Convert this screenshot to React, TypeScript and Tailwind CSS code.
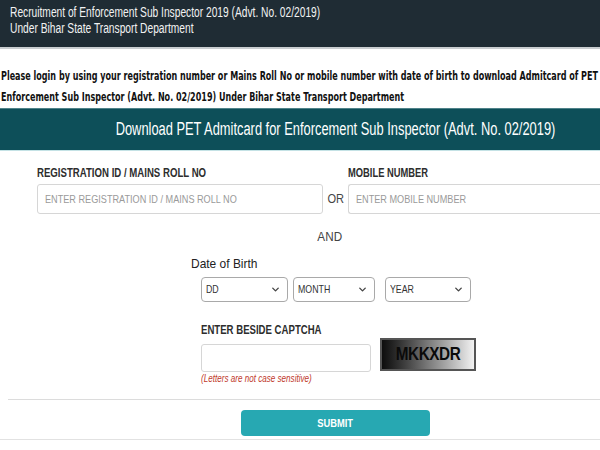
import { ChevronDown } from "lucide-react";

function Sel({ label, w }: { label: string; w: string }) {
  return (
    <div
      className={`${w} h-[25px] border border-[#a9a9a9] rounded-[4px] flex items-center justify-between pl-[4px] pr-[6px] bg-white`}
    >
      <span className="text-[11px] text-[#333] inline-block origin-left scale-x-[0.8]">{label}</span>
      <ChevronDown size={11} strokeWidth={3} color="#444" />
    </div>
  );
}

export default function App() {
  return (
    <div className="w-[600px] h-[450px] overflow-hidden bg-white font-['Liberation_Sans',Arial,sans-serif]">
      {/* header */}
      <div className="h-[47px] bg-[#1f2c34] pl-[10px] pt-[4px] text-[#f2f2f2] text-[14px] leading-[16px] whitespace-nowrap overflow-hidden">
        <div className="origin-left scale-x-[0.73]">Recruitment of Enforcement Sub Inspector 2019 (Advt. No. 02/2019)</div>
        <div className="origin-left scale-x-[0.73]">Under Bihar State Transport Department</div>
      </div>
      <div className="h-[2px] bg-[#c9cdd0]" />

      {/* instructions */}
      <div className="pt-[17px] pl-[1px] h-[59px] font-['DejaVu_Sans',Verdana,sans-serif] font-bold text-[12px] leading-[21px] text-[#111] whitespace-nowrap">
        <div className="origin-left scale-x-[0.67]">
          Please login by using your registration number or Mains Roll No or mobile number with date of birth to download Admitcard of PET
        </div>
        <div className="origin-left scale-x-[0.67]">
          Enforcement Sub Inspector (Advt. No. 02/2019) Under Bihar State Transport Department
        </div>
      </div>

      {/* teal bar */}
      <div className="h-[42px] bg-[#0d4f59] border-t border-[#4f8289] flex items-center justify-center pl-[70px] whitespace-nowrap">
        <span className="text-white text-[18px] inline-block scale-x-[0.715]">
          Download PET Admitcard for Enforcement Sub Inspector (Advt. No. 02/2019)
        </span>
      </div>
      <div className="h-[1px] bg-[#c4e2e5]" />

      {/* form row 1 */}
      <div className="flex pt-[15px] whitespace-nowrap">
        <div className="ml-[37px] w-[286px] shrink-0">
          <div className="h-[14px] leading-[14px] text-[13px] font-bold text-[#2d2d2d] origin-left scale-x-[0.74]">
            REGISTRATION ID / MAINS ROLL NO
          </div>
          <div className="mt-[4px] h-[30px] border border-[#d6d6d6] rounded-[3px] flex items-center pl-[7px]">
            <span className="text-[11px] text-[#9a9a9a] inline-block origin-left scale-x-[0.83]">
              ENTER REGISTRATION ID / MAINS ROLL NO
            </span>
          </div>
        </div>
        <div className="w-[25px] shrink-0 pt-[18px] flex justify-center">
          <span className="text-[13px] text-[#444] inline-block scale-x-[0.85] leading-[30px]">OR</span>
        </div>
        <div className="flex-1">
          <div className="h-[14px] leading-[14px] text-[12px] font-bold text-[#2d2d2d] origin-left scale-x-[0.78]">
            MOBILE NUMBER
          </div>
          <div className="mt-[4px] h-[30px] border border-r-0 border-[#d6d6d6] rounded-l-[3px] flex items-center pl-[7px]">
            <span className="text-[11px] text-[#9a9a9a] inline-block origin-left scale-x-[0.83]">ENTER MOBILE NUMBER</span>
          </div>
        </div>
      </div>

      {/* AND */}
      <div className="mt-[16px] h-[14px] leading-[14px] flex justify-center pl-[60px]">
        <span className="text-[13px] text-[#444] inline-block scale-x-[0.9]">AND</span>
      </div>

      {/* DOB */}
      <div className="mt-[13px] ml-[191px] whitespace-nowrap">
        <div className="h-[14px] leading-[14px] text-[13px] text-[#222] origin-left scale-x-[0.92]">Date of Birth</div>
        <div className="mt-[6px] ml-[10px] flex gap-[5px]">
          <Sel label="DD" w="w-[87px]" />
          <Sel label="MONTH" w="w-[82px]" />
          <div className="ml-[5px]">
            <Sel label="YEAR" w="w-[86px]" />
          </div>
        </div>
      </div>

      {/* captcha */}
      <div className="mt-[21px] ml-[201px] whitespace-nowrap">
        <div className="h-[14px] leading-[14px] text-[12px] font-bold text-[#2d2d2d] origin-left scale-x-[0.8]">
          ENTER BESIDE CAPTCHA
        </div>
        <div className="mt-[7px] flex items-start">
          <div className="w-[170px] h-[28px] border border-[#d6d6d6] rounded-[3px]" />
          <div className="ml-[9px] -mt-[6px] w-[96px] h-[33px] border-2 border-[#555] bg-gradient-to-r from-[#0d0d0d] via-[#7a7a7a] to-[#f2f2f2] flex items-center justify-center">
            <span className="text-[18px] font-bold text-[#0a0a0a] inline-block scale-x-[0.85] tracking-[-0.5px]">MKKXDR</span>
          </div>
        </div>
        <div className="mt-[1px] h-[12px] leading-[12px] text-[10px] italic text-[#c0392b] origin-left scale-x-[0.81]">
          (Letters are not case sensitive)
        </div>
      </div>

      <div className="mt-[14px] ml-[8px] h-[1px] bg-[#dcdcdc]" />

      <div className="mt-[10px] ml-[241px] w-[189px] h-[26px] rounded-[4px] bg-[#27a8b2] flex items-center justify-center">
        <span className="text-white text-[11px] font-bold inline-block scale-x-[0.85]">SUBMIT</span>
      </div>

      <div className="mt-[3px] h-[1px] bg-[#e2e2e2]" />
    </div>
  );
}
